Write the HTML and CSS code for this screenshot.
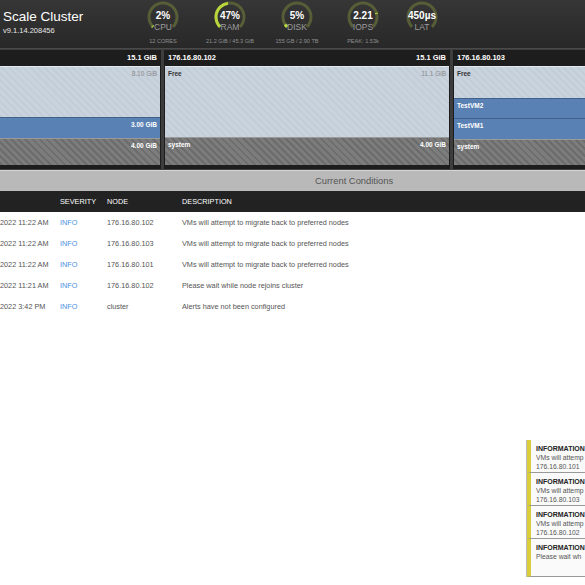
FILE: index.html
```html
<!DOCTYPE html>
<html lang="en">
<head>
    <meta charset="UTF-8">
    <meta name="viewport" content="width=device-width, initial-scale=1.0">
    <title>Scale Cluster</title>
    <link rel="stylesheet" href="styles.css">
</head>
<body>
    <div class="topbar">
        <div class="cluster-name">
            <div class="title">Scale Cluster</div>
            <div class="version">v9.1.14.208456</div>
        </div>
        <div class="gauges">
            <div class="gauge">
                <div class="dial">
                    <svg viewBox="0 0 34 34"><path class="track" d="M7.1 26.9 A14 14 0 1 1 26.9 26.9" pathLength="100"/><path class="fill" d="M7.1 26.9 A14 14 0 1 1 26.9 26.9" pathLength="100" stroke-dasharray="2 100"/></svg>
                    <div class="value">2%</div>
                    <div class="label">CPU</div>
                </div>
                <div class="sub">12 CORES</div>
            </div>
            <div class="gauge">
                <div class="dial">
                    <svg viewBox="0 0 34 34"><path class="track" d="M7.1 26.9 A14 14 0 1 1 26.9 26.9" pathLength="100"/><path class="fill" d="M7.1 26.9 A14 14 0 1 1 26.9 26.9" pathLength="100" stroke-dasharray="47 100"/></svg>
                    <div class="value">47%</div>
                    <div class="label">RAM</div>
                </div>
                <div class="sub">21.2 GiB / 45.3 GiB</div>
            </div>
            <div class="gauge">
                <div class="dial">
                    <svg viewBox="0 0 34 34"><path class="track" d="M7.1 26.9 A14 14 0 1 1 26.9 26.9" pathLength="100"/><path class="fill" d="M7.1 26.9 A14 14 0 1 1 26.9 26.9" pathLength="100" stroke-dasharray="5 100"/></svg>
                    <div class="value">5%</div>
                    <div class="label">DISK</div>
                </div>
                <div class="sub">155 GB / 2.90 TB</div>
            </div>
            <div class="gauge">
                <div class="dial">
                    <svg viewBox="0 0 34 34"><path class="track" d="M7.1 26.9 A14 14 0 1 1 26.9 26.9" pathLength="100"/><path class="fill" d="M7.1 26.9 A14 14 0 1 1 26.9 26.9" pathLength="100" stroke-dasharray="0 77 1.5 100"/></svg>
                    <div class="value">2.21</div>
                    <div class="label">IOPS</div>
                </div>
                <div class="sub">PEAK: 1.53k</div>
            </div>
            <div class="gauge">
                <div class="dial">
                    <svg viewBox="0 0 34 34"><path class="track" d="M7.1 26.9 A14 14 0 1 1 26.9 26.9" pathLength="100"/></svg>
                    <div class="value">450µs</div>
                    <div class="label">LAT</div>
                </div>
            </div>
        </div>
    </div>

    <div class="nodes">
        <div class="node">
            <div class="node-head"><span></span><span>15.1 GiB</span></div>
            <div class="node-body">
                <div class="seg free" style="flex: 8.1"><span></span><span class="size">8.10 GiB</span></div>
                <div class="seg vm" style="flex: 3"><span></span><span>3.00 GiB</span></div>
                <div class="seg system" style="flex: 4"><span></span><span>4.00 GiB</span></div>
            </div>
            <div class="node-foot"></div>
        </div>
        <div class="node">
            <div class="node-head"><span>176.16.80.102</span><span>15.1 GiB</span></div>
            <div class="node-body">
                <div class="seg free" style="flex: 11.1"><span>Free</span><span class="size">11.1 GiB</span></div>
                <div class="seg system" style="flex: 4"><span>system</span><span>4.00 GiB</span></div>
            </div>
            <div class="node-foot"></div>
        </div>
        <div class="node">
            <div class="node-head"><span>176.16.80.103</span><span></span></div>
            <div class="node-body">
                <div class="seg free" style="flex: 5.1"><span>Free</span><span></span></div>
                <div class="seg vm" style="flex: 2.9"><span>TestVM2</span><span></span></div>
                <div class="seg vm" style="flex: 3.1"><span>TestVM1</span><span></span></div>
                <div class="seg system" style="flex: 4"><span>system</span><span></span></div>
            </div>
            <div class="node-foot"></div>
        </div>
    </div>

    <div class="conditions">Current Conditions</div>

    <div class="alerts">
        <div class="alert-row alert-head">
            <div></div>
            <div>SEVERITY</div>
            <div>NODE</div>
            <div>DESCRIPTION</div>
        </div>
        <div class="alert-row">
            <div>2022 11:22 AM</div>
            <div class="info">INFO</div>
            <div>176.16.80.102</div>
            <div>VMs will attempt to migrate back to preferred nodes</div>
        </div>
        <div class="alert-row">
            <div>2022 11:22 AM</div>
            <div class="info">INFO</div>
            <div>176.16.80.103</div>
            <div>VMs will attempt to migrate back to preferred nodes</div>
        </div>
        <div class="alert-row">
            <div>2022 11:22 AM</div>
            <div class="info">INFO</div>
            <div>176.16.80.101</div>
            <div>VMs will attempt to migrate back to preferred nodes</div>
        </div>
        <div class="alert-row">
            <div>2022 11:21 AM</div>
            <div class="info">INFO</div>
            <div>176.16.80.102</div>
            <div>Please wait while node rejoins cluster</div>
        </div>
        <div class="alert-row">
            <div>2022 3:42 PM</div>
            <div class="info">INFO</div>
            <div>cluster</div>
            <div>Alerts have not been configured</div>
        </div>
    </div>

    <div class="toasts">
        <div class="toast">
            <div class="toast-title">INFORMATION</div>
            <div class="toast-text">VMs will attemp<br>176.16.80.101</div>
        </div>
        <div class="toast">
            <div class="toast-title">INFORMATION</div>
            <div class="toast-text">VMs will attemp<br>176.16.80.103</div>
        </div>
        <div class="toast">
            <div class="toast-title">INFORMATION</div>
            <div class="toast-text">VMs will attemp<br>176.16.80.102</div>
        </div>
        <div class="toast last">
            <div class="toast-title">INFORMATION</div>
            <div class="toast-text">Please wait wh</div>
        </div>
    </div>
</body>
</html>
```

FILE: styles.css
```css
* {
    box-sizing: border-box;
}

body {
    margin: 0;
    width: 585px;
    height: 585px;
    overflow: hidden;
    position: relative;
    background: #fff;
    font-family: "Liberation Sans", Arial, sans-serif;
}

/* top bar */
.topbar {
    height: 48px;
    display: flex;
    background: linear-gradient(#363636, #282828);
    color: #fff;
}

.cluster-name {
    width: 133px;
    padding: 9px 0 0 3px;
}

.title {
    font-size: 13.5px;
    line-height: 16px;
}

.version {
    font-size: 7.5px;
    line-height: 9px;
    margin-top: 0.5px;
    color: #e6e6e6;
}

.gauges {
    display: grid;
    grid-template-columns: 60px 74px 60px 72px 46px;
}

.gauge {
    display: flex;
    flex-direction: column;
    align-items: center;
}

.dial {
    position: relative;
    width: 34px;
    height: 34px;
    padding-top: 10px;
    text-align: center;
}

.dial svg {
    position: absolute;
    left: 0;
    top: 0;
    width: 34px;
    height: 34px;
}

.dial path {
    fill: none;
    stroke-width: 3;
}

.dial .track {
    stroke: #565d37;
}

.dial .fill {
    stroke: #b8d63c;
}

.value {
    position: relative;
    font-size: 10px;
    font-weight: bold;
    line-height: 12px;
    white-space: nowrap;
    margin: 0 -10px;
}

.label {
    position: relative;
    font-size: 8.5px;
    line-height: 10px;
    color: #9c9c9c;
}

.sub {
    margin-top: 4px;
    font-size: 5.6px;
    line-height: 7px;
    color: #8e8e8e;
    white-space: nowrap;
}

/* node memory panels */
.nodes {
    height: 122px;
    padding: 1px 0;
    display: flex;
    gap: 3px;
    margin-left: -125px;
    background: #3d3d3d;
    border-top: 1px solid #4a4a4a;
}

.node {
    flex: 0 0 286px;
    display: flex;
    flex-direction: column;
    border-left: 1px solid #1c1c1c;
    border-right: 1px solid #1c1c1c;
}

.node-head {
    height: 16px;
    padding: 0 3px;
    display: flex;
    justify-content: space-between;
    align-items: center;
    background: #1d1d1d;
    color: #fff;
    font-size: 7.5px;
    font-weight: bold;
}

.node-body {
    height: 100px;
    display: flex;
    flex-direction: column;
}

.node-foot {
    height: 4px;
    background: #1d1d1d;
}

.seg {
    display: flex;
    justify-content: space-between;
    padding: 3px 3px 0 3px;
    font-size: 6.5px;
    font-weight: bold;
    line-height: 8px;
    color: #fff;
    min-height: 0;
}

.seg.free {
    color: #333;
    border-top: 1px solid #e2e8ee;
    background: repeating-linear-gradient(45deg, #c9d3dd 0 3px, #c3cdd8 3px 5px);
}

.seg.free .size {
    color: #8a8a8a;
    font-weight: normal;
}

.seg.vm {
    background: #5a81b3;
    border-top: 1px solid #40618c;
}

.seg.system {
    border-top: 1px solid #9a9a9a;
    background: repeating-linear-gradient(45deg, #7c7c7c 0 3px, #6c6c6c 3px 5px);
}

/* conditions */
.conditions {
    height: 21px;
    padding-left: 315px;
    border-top: 1px solid #d6d6d6;
    background: #b9b9b9;
    color: #555;
    font-size: 9.4px;
    line-height: 20px;
}

.alert-row {
    display: grid;
    grid-template-columns: 60px 47px 75px 1fr;
    height: 20.9px;
    align-items: center;
    font-size: 7.3px;
    color: #555;
    white-space: nowrap;
}

.alert-head {
    height: 21px;
    background: #222;
    color: #fff;
}

.info {
    color: #4a90e2;
}

/* toast notifications */
.toasts {
    position: absolute;
    left: 526px;
    top: 440px;
    width: 59px;
    border-left: 1px solid #bbb;
}

.toast {
    height: 33px;
    padding: 4px 0 0 5px;
    border-left: 4px solid #d9cd3b;
    border-bottom: 1px solid #999;
    background: #fafafa;
    white-space: nowrap;
}

.toast.last {
    height: 38px;
}

.toast-title {
    font-size: 7px;
    font-weight: bold;
    line-height: 9px;
    color: #222;
}

.toast-text {
    margin-top: 1px;
    font-size: 6.8px;
    line-height: 8.5px;
    color: #555;
}
```
